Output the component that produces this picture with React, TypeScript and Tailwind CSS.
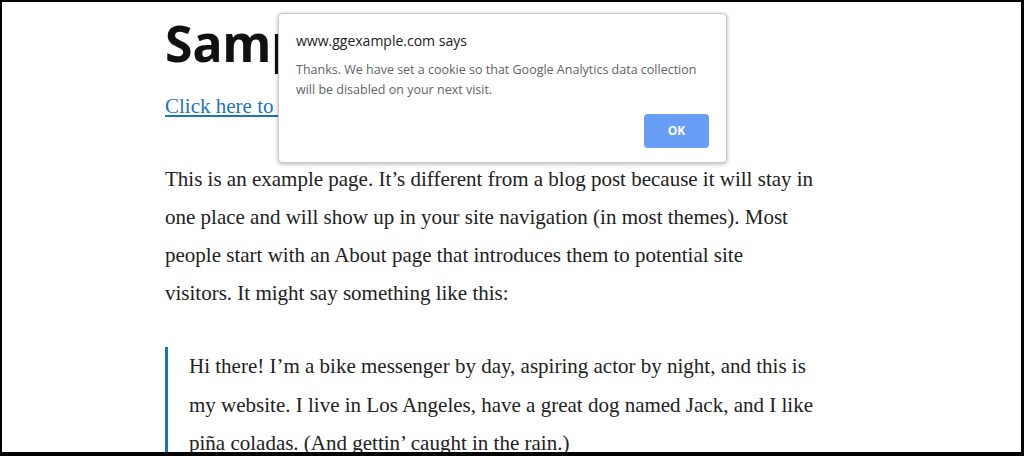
export default function App() {
    return (
        <div className="relative h-[456px] w-[1024px] overflow-hidden border-t-2 border-r-[3px] border-b-4 border-l-2 border-black bg-white">
            <main className="ml-[163px] w-[700px] pt-[16px]">
                <h1 className="text-[50px] leading-[50px] font-bold text-[#111] [font-family:'Noto_Sans',sans-serif]">
                    Sample Page
                </h1>

                <p className="mt-[19px] text-[21px] leading-[38px] [font-family:'Liberation_Serif',serif]">
                    <a href="#" className="text-[#1e73be] underline underline-offset-2">
                        Click here to opt-out of Google Analytics
                    </a>
                </p>

                {/* line breaks follow the reference's wrapping */}
                <p className="mt-[35px] text-[21px] leading-[38px] text-[#222] [font-family:'Liberation_Serif',serif]">
                    This is an example page. It’s different from a blog post because it will stay in
                    <br />
                    one place and will show up in your site navigation (in most themes). Most
                    <br />
                    people start with an About page that introduces them to potential site
                    <br />
                    visitors. It might say something like this:
                </p>

                <blockquote className="mt-[35px] border-l-[3px] border-[#1e73be] pl-[21px] text-[21px] leading-[38.5px] text-[#222] [font-family:'Liberation_Serif',serif]">
                    <p>
                        Hi there! I’m a bike messenger by day, aspiring actor by night, and this is
                        <br />
                        my website. I live in Los Angeles, have a great dog named Jack, and I like
                        <br />
                        piña coladas. (And gettin’ caught in the rain.)
                    </p>
                </blockquote>
            </main>

            <div className="absolute top-[11px] left-[276px] w-[449px] rounded-sm border border-[#c8c8c8] bg-white px-[17px] pt-[17px] pb-[14px] shadow-[0_1px_4px_rgba(0,0,0,0.3)] [font-family:'Open_Sans',sans-serif]">
                <h2 className="text-[14px] leading-[20px] text-[#202124]">www.ggexample.com says</h2>
                <p className="mt-[9px] text-[12.5px] leading-[20px] text-[#5f6368]">
                    Thanks. We have set a cookie so that Google Analytics data collection will be disabled on your next
                    visit.
                </p>
                <div className="mt-[14px] flex justify-end">
                    <button className="h-[34px] w-[65px] rounded-[4px] bg-[#689ef6] text-[12px] font-bold text-white">
                        OK
                    </button>
                </div>
            </div>
        </div>
    );
}
